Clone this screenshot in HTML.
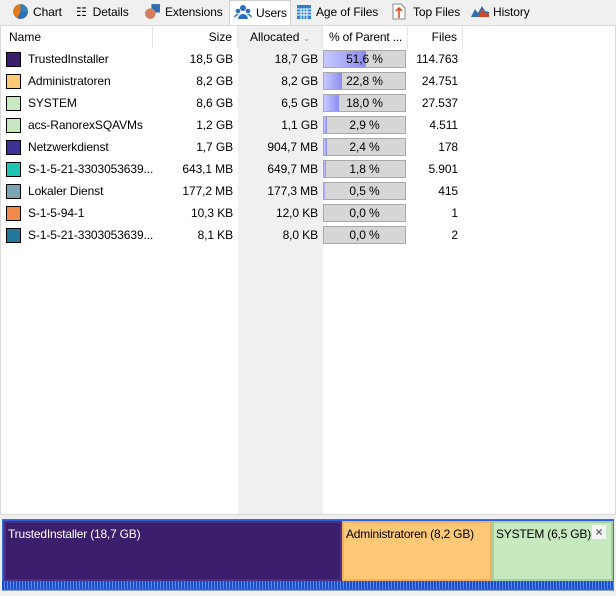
<!DOCTYPE html>
<html><head><meta charset="utf-8"><style>
*{margin:0;padding:0;box-sizing:border-box}
body{width:616px;height:596px;background:#f0f0f0;font-family:"Liberation Sans",sans-serif;font-size:12px;color:#000;position:relative;overflow:hidden}
.tabs{position:absolute;top:0;left:0;height:25px;width:616px}
.tab{position:absolute;top:3px;height:20px;line-height:18px;white-space:nowrap;letter-spacing:-0.1px}
.tab svg{margin-right:4px}
.tab.sel{top:0;height:26px;background:#fff;border:1px solid #d0d0d0;border-bottom:none;line-height:24px;padding:0 4px}
.panel{position:absolute;top:25px;left:0;width:616px;height:490px;background:#fff;border:1px solid #d9d9d9}
.alloc{position:absolute;left:237px;top:0;width:85px;height:488px;background:#f0f0f0}
.hdr{position:absolute;top:0;height:23px;line-height:23px}
.vdiv{position:absolute;top:0;height:22px;width:1px;background:#e5e5e5}
.row{position:absolute;left:0;height:22px;width:470px;line-height:22px;letter-spacing:-0.1px}
.sw{position:absolute;left:6px;top:4px;width:15px;height:15px;border:1px solid #000}
.c{position:absolute;white-space:nowrap}
.bar{position:absolute;left:323px;top:2px;width:83px;height:18px;background:#d6d6d6;border:1px solid #a9a9a9;text-align:center;line-height:16px}
.fill{position:absolute;left:0;top:0;height:16px;background:linear-gradient(90deg,#c8c8ff,#8c8cf0)}
.bar span{position:relative}
.tm{position:absolute;top:521px;height:60px;padding:4px 2px;font-size:12px;letter-spacing:-0.2px}
</style></head><body>
<div class="tabs">
<div class="tab" style="left:12px"><svg width="17" height="17" style="vertical-align:-4px" viewBox="0 0 16 16"><circle cx="8" cy="8" r="7" fill="#e07a1f"/><path d="M8 8V1A7 7 0 0 1 15 8z" fill="#2f7fc1"/><path d="M8 8L15 8A7 7 0 0 1 5 14.3z" fill="#2f6fb0"/></svg>Chart</div>
<div class="tab" style="left:76px"><span style="margin-right:6px">☷</span>Details</div>
<div class="tab" style="left:144px"><svg width="17" height="17" style="vertical-align:-4px" viewBox="0 0 16 16"><rect x="7" y="1" width="8" height="8" fill="#2f6fb0"/><circle cx="6" cy="10" r="5" fill="#d08060"/></svg>Extensions</div>
<div class="tab sel" style="left:229px;width:62px"><svg width="18" height="16" style="vertical-align:-3px" viewBox="0 0 18 16"><circle cx="9" cy="4" r="3" fill="#2a6fc0"/><circle cx="4" cy="7" r="2.3" fill="#2a6fc0"/><circle cx="14" cy="7" r="2.3" fill="#2a6fc0"/><path d="M4 15a5 5 0 0 1 10 0z" fill="#2a6fc0"/><path d="M0 14a4 4 0 0 1 5-4M18 14a4 4 0 0 0-5-4" fill="#2a6fc0"/></svg>Users</div>
<div class="tab" style="left:296px"><svg width="16" height="16" style="vertical-align:-4px" viewBox="0 0 16 16"><rect x="1" y="1" width="14" height="14" fill="#2f7fd0"/><path d="M1 5h14M1 8h14M1 11h14M5 5v10M8 5v10M11 5v10" stroke="#fff" stroke-width="1"/></svg>Age of Files</div>
<div class="tab" style="left:392px"><svg width="14" height="17" style="vertical-align:-4px;margin-right:7px" viewBox="0 0 14 17"><path d="M1 1h8l4 4v11H1z" fill="#fff" stroke="#888"/><path d="M7 15V5M4 8l3-3 3 3" stroke="#e05020" stroke-width="1.6" fill="none"/></svg>Top Files</div>
<div class="tab" style="left:471px"><svg width="18" height="14" style="vertical-align:-2px" viewBox="0 0 18 14"><path d="M0 13L4 5l3 4 4-7 3 5 4 1v5z" fill="#2f6fb0"/><path d="M7 13l4-8 3 4 4 0v4z" fill="#d04a2a"/></svg>History</div>
</div>
<div class="panel">
<div class="alloc"></div>
<div class="hdr" style="left:8px">Name</div>
<div class="vdiv" style="left:151px"></div>
<div class="hdr" style="left:152px;width:79px;text-align:right">Size</div>
<div class="vdiv" style="left:236px"></div>
<div class="hdr" style="left:249px">Allocated <span style="color:#999;font-size:9px">⌄</span></div>
<div class="vdiv" style="left:321px"></div>
<div class="hdr" style="left:328px;letter-spacing:-0.2px">% of Parent ...</div>
<div class="vdiv" style="left:406px"></div>
<div class="hdr" style="left:407px;width:49px;text-align:right">Files</div>
<div class="vdiv" style="left:461px"></div>
</div>
<div id="rows"></div>
<div style="position:absolute;left:2px;top:519px;width:612px;height:72px;border:1px solid #3a6fd8;border-bottom:1px solid #8aa0c0;background:repeating-linear-gradient(90deg,#2456d0 0 2px,#4a7ae8 2px 3px)"></div>
<div style="position:absolute;left:3px;top:520px;width:610px;height:3px;background:#2a5ed8"></div>
<div class="tm" style="left:4px;width:338px;background:#3b1f6d;border:2px solid #4a2f80;color:#fff">TrustedInstaller (18,7 GB)</div>
<div class="tm" style="left:342px;width:150px;background:#fec977;border:2px solid #f0b060">Administratoren (8,2 GB)</div>
<div class="tm" style="left:492px;width:121px;background:#c6e9c0;border:2px solid #a8d0a0">SYSTEM (6,5 GB)</div>
<div style="position:absolute;left:592px;top:525px;width:14px;height:14px;background:#f4f4f4;color:#666;font-size:12px;line-height:14px;text-align:center;font-weight:bold">×</div>
<div style="position:absolute;left:2px;top:581px;width:612px;height:8px;background:repeating-linear-gradient(90deg,#1d4fc8 0 2px,#5a8af0 2px 3px)"></div>
<script>
var d=[["#3b1f6d","TrustedInstaller","18,5 GB","18,7 GB",51.6,"51,6 %","114.763"],
["#fec977","Administratoren","8,2 GB","8,2 GB",22.8,"22,8 %","24.751"],
["#c6e9c0","SYSTEM","8,6 GB","6,5 GB",18,"18,0 %","27.537"],
["#c6e9c0","acs-RanorexSQAVMs","1,2 GB","1,1 GB",2.9,"2,9 %","4.511"],
["#3c3196","Netzwerkdienst","1,7 GB","904,7 MB",2.4,"2,4 %","178"],
["#1fc4b4","S-1-5-21-3303053639...","643,1 MB","649,7 MB",1.8,"1,8 %","5.901"],
["#7ca3b4","Lokaler Dienst","177,2 MB","177,3 MB",0.5,"0,5 %","415"],
["#f28a4a","S-1-5-94-1","10,3 KB","12,0 KB",0,"0,0 %","1"],
["#22799a","S-1-5-21-3303053639...","8,1 KB","8,0 KB",0,"0,0 %","2"]];
var h="";d.forEach(function(r,i){var y=48+i*22;
h+='<div class="row" style="top:'+y+'px"><div class="sw" style="background:'+r[0]+'"></div><div class="c" style="left:28px">'+r[1]+'</div><div class="c" style="left:152px;width:81px;text-align:right">'+r[2]+'</div><div class="c" style="left:237px;width:81px;text-align:right">'+r[3]+'</div><div class="bar"><div class="fill" style="width:'+(r[4]*0.81+(r[4]>0&&r[4]<3?1:0))+'px"></div><span>'+r[5]+'</span></div><div class="c" style="left:407px;width:51px;text-align:right">'+r[6]+'</div></div>';});
document.getElementById("rows").innerHTML=h;
</script>
</body></html>
